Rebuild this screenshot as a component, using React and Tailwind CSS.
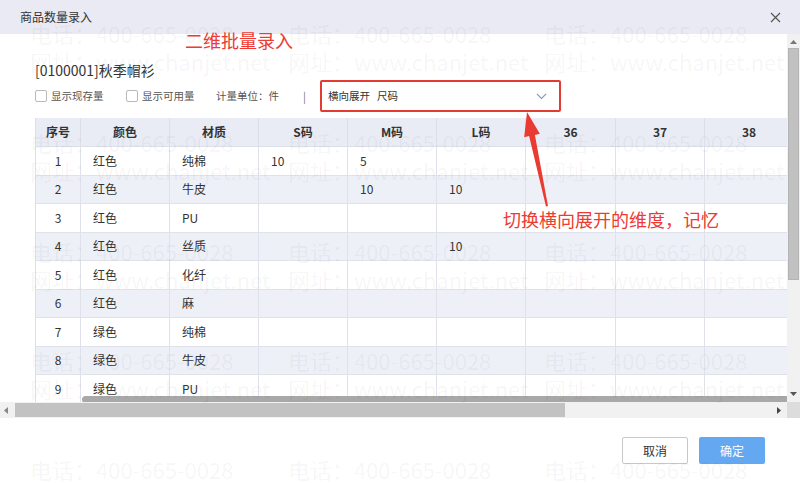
import React from "react";

const FONT = { fontFamily: '"Noto Sans CJK SC", "Noto Sans", sans-serif' };

const rows = [
  ["1", "红色", "纯棉", "10", "5", ""],
  ["2", "红色", "牛皮", "", "10", "10"],
  ["3", "红色", "PU", "", "", ""],
  ["4", "红色", "丝质", "", "", "10"],
  ["5", "红色", "化纤", "", "", ""],
  ["6", "红色", "麻", "", "", ""],
  ["7", "绿色", "纯棉", "", "", ""],
  ["8", "绿色", "牛皮", "", "", ""],
  ["9", "绿色", "PU", "", "", ""],
];

const headers = ["序号", "颜色", "材质", "S码", "M码", "L码", "36", "37", "38"];

function Checkbox({ label, w }) {
  return (
    <div className={`flex items-center gap-[4px] shrink-0 ${w}`}>
      <span className="w-[12px] h-[12px] border border-[#b9b9b9] rounded-[2px] bg-white" />
      <span className="text-[10.5px] text-[#555]">{label}</span>
    </div>
  );
}

function WLine({ text }) {
  return (
    <div className="flex">
      <span className="w-[272px]">{text}</span>
      <span className="w-[270px]">{text}</span>
      <span className="w-[270px]">{text}</span>
    </div>
  );
}

function Watermarks() {
  const blocks = [0, 1, 2, 3];
  return (
    <div className="absolute inset-0 pointer-events-none pt-[19px] pl-[30px] flex flex-col text-black/[0.05] text-[22px] leading-[28px] whitespace-nowrap" style={FONT}>
      {blocks.map((b) => (
        <div key={b} className="h-[109px] flex flex-col shrink-0">
          <WLine text="电话：400-665-0028" />
          <WLine text="网址：www.chanjet.net" />
        </div>
      ))}
      <div className="h-[28px] shrink-0 flex flex-col">
        <WLine text="电话：400-665-0028" />
      </div>
    </div>
  );
}

export default function App() {
  const colW = ["w-[45px]", "w-[89px]", "w-[89px]", "w-[89px]", "w-[89px]", "w-[89px]", "w-[90px]", "w-[89px]", "w-[89px]"];
  return (
    <div className="relative w-[800px] h-[483px] overflow-hidden bg-white text-[#333]" style={FONT}>
      {/* title bar */}
      <div className="h-[34px] bg-[#e9eaf3] flex items-center justify-between pl-[20px] pr-[18px]">
        <span className="text-[12px] text-[#333]">商品数量录入</span>
        <svg width="11" height="11" viewBox="0 0 11 11" className="mr-[1px]">
          <path d="M1 1 L10 10 M10 1 L1 10" stroke="#555" strokeWidth="1.2" />
        </svg>
      </div>

      {/* body */}
      <div className="flex h-[368px]">
        <div className="relative flex-1 overflow-hidden pl-[35px]">
          <div className="pt-[26px] h-[46px] text-[14px] leading-[20px] text-[#333]">[0100001]秋季帽衫</div>
          <div className="h-[32px] flex items-center">
            <Checkbox label="显示现存量" w="w-[91px]" />
            <Checkbox label="显示可用量" w="w-[90px]" />
            <span className="w-[87px] shrink-0 text-[10.5px] text-[#555]">计量单位：件</span>
            <span className="w-[17px] shrink-0 text-[11px] text-[#777]">|</span>
            <div className="w-[241px] shrink-0 h-[32px] border-2 border-[#e33a32] rounded-[2px] flex items-center pl-[6px] pr-[12px]">
              <span className="text-[10.5px] text-[#333]">横向展开</span>
              <span className="ml-[7px] text-[10.5px] text-[#333]">尺码</span>
              <svg width="11" height="7" viewBox="0 0 11 7" className="ml-auto">
                <path d="M1 1 L5.5 5.5 L10 1" fill="none" stroke="#7f9cc4" strokeWidth="1.1" />
              </svg>
            </div>
          </div>

          {/* table */}
          <div className="mt-[6px] w-[800px] border-l border-[#dcdfe8] text-[12px]">
            <div className="flex h-[29px] bg-[#e9ecf5] border-b border-[#dcdfe8]">
              {headers.map((h, i) => (
                <div key={h} className={`${colW[i]} shrink-0 flex items-center justify-center border-r border-[#dcdfe8] font-bold text-[#333]`}>
                  {h}
                </div>
              ))}
            </div>
            {rows.map((r, ri) => (
              <div key={ri} className={`flex h-[28.5px] border-b border-[#dfe2ea] ${ri % 2 === 1 ? "bg-[#eef0f7]" : "bg-white"}`}>
                {headers.map((h, ci) => (
                  <div
                    key={ci}
                    className={`${colW[ci]} shrink-0 flex items-center border-r border-[#dfe2ea] text-[#333] ${ci === 0 ? "justify-center" : "pl-[12px]"}`}
                  >
                    {r[ci] || ""}
                  </div>
                ))}
              </div>
            ))}
          </div>

          {/* inner horizontal scroll thumb */}
          <div className="absolute left-[82px] right-0 top-[362px] h-[7px] bg-[#a8a8a8] rounded-l-[4px]" />
        </div>

        {/* vertical scrollbar */}
        <div className="w-[13px] bg-[#f1f1f1] flex flex-col items-center pt-[6px]">
          <svg width="7" height="4" viewBox="0 0 7 4"><path d="M0 4 L3.5 0 L7 4 Z" fill="#777" /></svg>
          <div className="mt-[4px] w-[11px] h-[232px] bg-[#c1c1c1] border border-[#b4b4b4]" />
          <div className="flex-1" />
          <svg width="7" height="4" viewBox="0 0 7 4" className="mb-[6px]"><path d="M0 0 L3.5 4 L7 0 Z" fill="#555" /></svg>
        </div>
      </div>

      {/* horizontal scrollbar */}
      <div className="flex h-[16px]">
        <div className="flex-1 bg-[#f1f1f1] flex items-center">
          <svg width="4" height="7" viewBox="0 0 4 7" className="ml-[4px]"><path d="M4 0 L0 3.5 L4 7 Z" fill="#888" /></svg>
          <div className="ml-[7px] w-[550px] h-[14px] bg-[#c2c2c2]" />
          <div className="flex-1" />
          <svg width="4" height="7" viewBox="0 0 4 7" className="mr-[6px]"><path d="M0 0 L4 3.5 L0 7 Z" fill="#444" /></svg>
        </div>
        <div className="w-[13px] bg-[#dcdcdc]" />
      </div>

      {/* footer */}
      <div className="flex justify-end gap-[11px] pt-[19px] pr-[35px]">
        <button className="w-[66px] h-[27px] border border-[#c8c8c8] rounded-[2px] bg-white text-[12px] text-[#333]">取消</button>
        <button className="w-[66px] h-[27px] rounded-[2px] bg-[#63a8f1] text-[12px] text-white">确定</button>
      </div>

      <Watermarks />

      {/* annotations */}
      <div className="absolute left-[185px] top-[28px] text-[18px] leading-[24px] text-[#ec3b33] pointer-events-none">二维批量录入</div>
      <div className="absolute left-[503px] top-[207px] text-[18px] leading-[24px] text-[#ec3b33] pointer-events-none">切换横向展开的维度，记忆</div>
      <svg className="absolute inset-0 pointer-events-none" width="800" height="483" viewBox="0 0 800 483">
        <polygon
          points="527,112 539.8,133.8 534.9,134.9 548,206 546,206.5 529.1,136.1 524.2,137.2"
          fill="#ea3b33"
        />
      </svg>
    </div>
  );
}
